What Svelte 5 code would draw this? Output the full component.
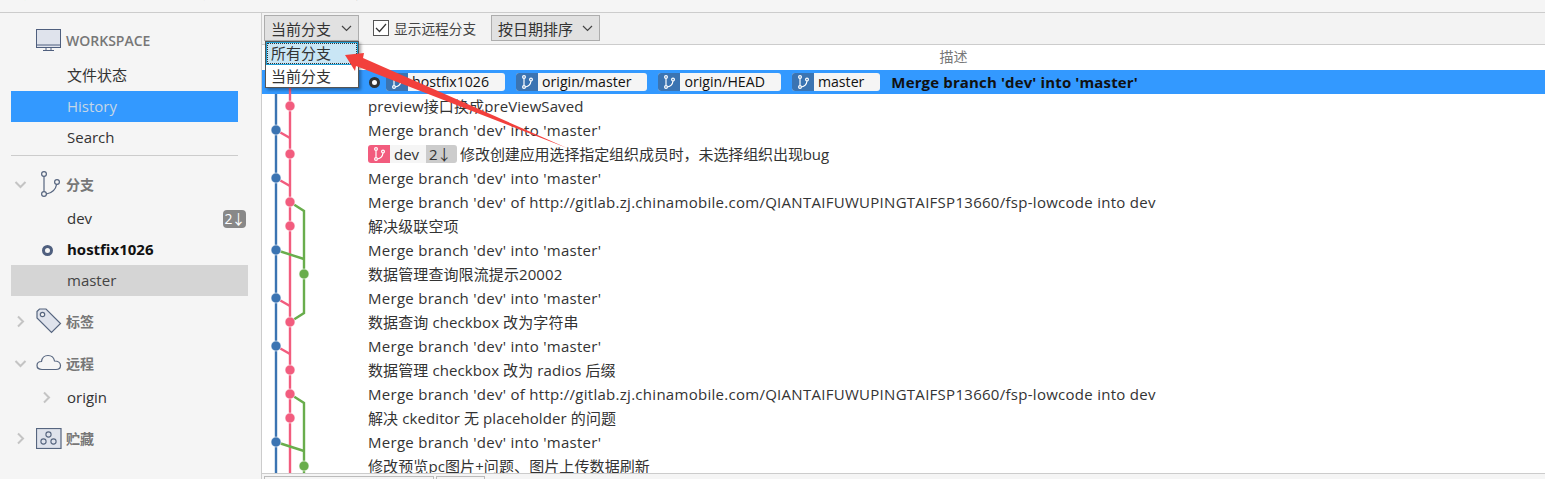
<script>
  const menu = [
    { label: "提交", w: 100 },
    { label: "拉取", w: 68 },
    { label: "推送", w: 69 },
    { label: "获取", w: 98 },
    { label: "分支", w: 68 },
    { label: "合并", w: 97 },
    { label: "贮藏", w: 110, off: true },
    { label: "丢弃", w: 60, off: true },
    { label: "标签", w: 40 }
  ];

  const commits = [
    "preview接口换成preViewSaved",
    "Merge branch 'dev' into 'master'",
    null,
    "Merge branch 'dev' into 'master'",
    "Merge branch 'dev' of http://gitlab.zj.chinamobile.com/QIANTAIFUWUPINGTAIFSP13660/fsp-lowcode into dev",
    "解决级联空项",
    "Merge branch 'dev' into 'master'",
    "数据管理查询限流提示20002",
    "Merge branch 'dev' into 'master'",
    "数据查询 checkbox 改为字符串",
    "Merge branch 'dev' into 'master'",
    "数据管理 checkbox 改为 radios 后缀",
    "Merge branch 'dev' of http://gitlab.zj.chinamobile.com/QIANTAIFUWUPINGTAIFSP13660/fsp-lowcode into dev",
    "解决 ckeditor 无 placeholder 的问题",
    "Merge branch 'dev' into 'master'",
    "修改预览pc图片+问题、图片上传数据刷新"
  ];

  const isLatin = (s) => /^[\x00-\x7f]+$/.test(s);

  const refs = ["hostfix1026", "origin/master", "origin/HEAD", "master"];

  // graph coordinates are relative to the rows area (x - 262, y - 70)
  const blue = "#3b74b2";
  const red = "#f25c7e";
  const green = "#69ad4c";
  const X = { b: 14, r: 28, g: 42 };
  const rowY = (i) => 12 + i * 24;
  const dots = [
    ["r", 1], ["b", 2], ["r", 3], ["b", 4], ["r", 5], ["r", 6], ["b", 7], ["g", 8],
    ["b", 9], ["r", 10], ["b", 11], ["r", 12], ["r", 13], ["r", 14], ["b", 15], ["g", 16]
  ];
  const colors = { b: blue, r: red, g: green };
  const links = [
    { d: "M14 60 L28 68", c: red },
    { d: "M14 108 L28 116", c: red },
    { d: "M14 228 L28 236", c: red },
    { d: "M14 276 L28 284", c: red },
    { d: "M28 132 L42 141 L42 243 L28 252", c: green },
    { d: "M14 180 L42 189", c: green },
    { d: "M28 324 L42 333 L42 410", c: green },
    { d: "M14 372 L42 381", c: green }
  ];
</script>

{#snippet branchIcon()}
  <svg class="branch" width="12" height="14" viewBox="0 0 12 14" fill="none" stroke="#fff" stroke-width="1.2">
    <circle cx="3" cy="2" r="1.4" />
    <circle cx="3" cy="12" r="1.4" />
    <circle cx="10" cy="4.6" r="1.4" />
    <path d="M3 3.4V10.6M4.4 12C7.5 11.5 9.6 9 10 6" />
  </svg>
{/snippet}

{#snippet chevron(open, size = 13)}
  <svg class="chev" width={size} height={size} viewBox="0 0 13 13" fill="none" stroke="#c4c4c4" stroke-width="2">
    {#if open}
      <path d="M1.5 4 L6.5 9 L11.5 4" />
    {:else}
      <path d="M4 1.5 L9 6.5 L4 11.5" />
    {/if}
  </svg>
{/snippet}

{#snippet comboArrow()}
  <svg width="11" height="7" viewBox="0 0 11 7" fill="none" stroke="#444" stroke-width="1.2">
    <path d="M1 1 L5.5 5.5 L10 1" />
  </svg>
{/snippet}

<div class="app">
  <nav class="menubar">
    {#each menu as m}
      <span class:off={m.off} style="width: {m.w}px">{m.label}</span>
    {/each}
  </nav>

  <div class="main">
    <aside class="sidebar">
      <div class="workspace">
        <svg width="26" height="22" viewBox="0 0 26 22" fill="none">
          <rect x="0.5" y="0.5" width="24" height="18" fill="#dfe3ec" stroke="#4f5f7e" />
          <path d="M0.5 16h24" stroke="#4f5f7e" />
          <path d="M10 19v2M15 19v2M7 21.5h11" stroke="#4f5f7e" />
        </svg>
        <span>WORKSPACE</span>
      </div>
      <div class="item">文件状态</div>
      <div class="item active">History</div>
      <div class="item">Search</div>
      <div class="rule"></div>

      <div class="section first">
        {@render chevron(true)}
        <svg class="section-icon" width="26" height="26" viewBox="0 0 26 26" fill="none" stroke="#56657f" stroke-width="1.2">
          <circle cx="8" cy="3" r="2.4" />
          <circle cx="8" cy="23" r="2.4" />
          <circle cx="21" cy="11" r="2.4" />
          <path d="M8 5.4V20.6M10.4 23C16 22 19.8 18 20.6 13.4" />
        </svg>
        <span>分支</span>
      </div>
      <div class="item branch-item">dev<span class="behind">2↓</span></div>
      <div class="item branch-item current">
        <span class="head"></span>hostfix1026
      </div>
      <div class="item branch-item selected">master</div>

      <div class="section tags">
        {@render chevron(false)}
        <svg class="section-icon" width="26" height="26" viewBox="0 0 26 26" fill="none" stroke="#56657f" stroke-width="1.2">
          <path d="M1 3.5 L3.5 1 L10 1 L24.5 15.5 L15.5 24.5 L1 10 Z" fill="#dfe3ec" />
          <circle cx="6.5" cy="6.5" r="2.2" fill="#f5f5f5" />
        </svg>
        <span>标签</span>
      </div>
      <div class="section remote">
        {@render chevron(true)}
        <svg class="section-icon" width="26" height="18" viewBox="0 0 26 18" fill="none" stroke="#56657f" stroke-width="1.2">
          <path d="M6 15.5C2.5 15.5 1 13.5 1 11.5C1 9 3 7.5 5.5 7.5C6 4 8.5 1.5 12 1.5C15.5 1.5 18 4 18.5 7C22 7 24.5 9 24.5 11.5C24.5 14 22.5 15.5 20 15.5Z" />
        </svg>
        <span>远程</span>
      </div>
      <div class="item origin">
        {@render chevron(false)}
        origin
      </div>
      <div class="section stash">
        {@render chevron(false)}
        <svg class="section-icon" width="26" height="21" viewBox="0 0 26 21" fill="none" stroke="#56657f" stroke-width="1.1">
          <rect x="0.5" y="0.5" width="24.5" height="20" fill="#dfe3ec" stroke-width="1.2" />
          <circle cx="12.5" cy="6.5" r="2.6" />
          <circle cx="7.5" cy="13.5" r="2.6" />
          <circle cx="17.5" cy="13.5" r="2.6" />
        </svg>
        <span>贮藏</span>
      </div>
    </aside>

    <section class="content">
      <div class="toolbar">
        <div class="combo first-combo">当前分支 {@render comboArrow()}</div>
        <label class="check">
          <svg width="16" height="16" viewBox="0 0 16 16" fill="none">
            <rect x="0.5" y="0.5" width="15" height="15" fill="#fff" stroke="#555" />
            <path d="M3 8 L6.5 11.5 L13 4" stroke="#333" stroke-width="1.2" />
          </svg>
          显示远程分支
        </label>
        <div class="combo sort-combo">按日期排序 {@render comboArrow()}</div>
      </div>

      <div class="table-head">描述</div>

      <div class="rows">
        <div class="row selected-row">
          <span class="marker"></span>
          {#each refs as r}
            <span class="pill">
              <span class="pill-icon">{@render branchIcon()}</span>
              <span class="pill-text">{r}</span>
            </span>
          {/each}
          <b>Merge branch 'dev' into 'master'</b>
        </div>
        {#each commits as c}
          <div class="row" class:latin={c && isLatin(c)}>
            {#if c}
              {c}
            {:else}
              <span class="pill dev">
                <span class="pill-icon">{@render branchIcon()}</span>
                <span class="pill-text">dev</span>
                <span class="pill-count">2↓</span>
              </span>
              <span class="dev-msg">修改创建应用选择指定组织成员时，未选择组织出现bug</span>
            {/if}
          </div>
        {/each}

        <svg class="graph" width="60" height="404" viewBox="0 0 60 404" fill="none">
          <path d="M14 24V404" stroke={blue} stroke-width="2.4" />
          <path d="M28 18V404" stroke={red} stroke-width="2.4" />
          {#each links as l}
            <path d={l.d} stroke={l.c} stroke-width="2.4" />
          {/each}
          {#each dots as [col, i]}
            <circle cx={X[col]} cy={rowY(i)} r="5" fill={colors[col]} stroke="#fff" stroke-width="0.6" />
          {/each}
        </svg>
      </div>

      <div class="statusbar">
        <span class="tab wide"></span>
        <span class="tab"></span>
      </div>

      <ul class="dropdown">
        <li class="focused">所有分支</li>
        <li>当前分支</li>
      </ul>
    </section>
  </div>

  <svg class="annotation" width="240" height="110" viewBox="0 0 240 110">
    <polygon points="5,5 24,3 23,8 227,98 16,16 15,21" fill="#f2403c" />
  </svg>
</div>

<style>
  :global(body) {
    margin: 0;
    background: #fff;
  }

  .app {
    position: relative;
    width: 1545px;
    height: 479px;
    overflow: hidden;
    display: flex;
    flex-direction: column;
    font-family: "Open Sans", "Noto Sans CJK SC", sans-serif;
    font-size: 14px;
    color: #333;
  }

  /* only the very bottom of the toolbar captions is left in the crop */
  .menubar {
    flex: none;
    height: 12px;
    padding-left: 20px;
    display: flex;
    align-items: flex-end;
    overflow: hidden;
    background: #f5f5f5;
    border-bottom: 1px solid #ccc;
  }

  .menubar span {
    flex: none;
    font-size: 15px;
    line-height: 15px;
    height: 15px;
    margin-bottom: 12px;
    color: #222;
  }

  .menubar .off {
    color: #999;
  }

  .main {
    flex: 1;
    display: flex;
    min-height: 0;
  }

  .sidebar {
    flex: none;
    width: 262px;
    box-sizing: border-box;
    padding: 14px 0 0 11px;
    background: #f5f5f5;
    border-right: 1px solid #ccc;
  }

  .workspace {
    display: flex;
    align-items: center;
    height: 26px;
    padding-left: 25px;
    font-size: 14px;
    font-weight: 600;
    color: #777;
  }

  .workspace span {
    margin-left: 4px;
  }

  .item {
    height: 31px;
    line-height: 31px;
    width: 227px;
    box-sizing: border-box;
    padding-left: 56px;
    font-size: 15px;
    color: #333;
    position: relative;
    white-space: nowrap;
  }

  .workspace + .item {
    margin-top: 7px;
  }

  .item.active {
    background: #3399ff;
    color: #c6d6e6;
  }

  .rule {
    width: 227px;
    height: 1px;
    margin-top: 2px;
    background: #ccc;
  }

  .section {
    display: flex;
    align-items: center;
    height: 26px;
    padding-left: 3px;
    font-size: 14px;
    font-weight: 600;
    color: #777;
  }

  .section .chev {
    flex: none;
  }

  .section-icon {
    flex: none;
    margin-left: 9px;
    margin-right: 4px;
  }

  .section.first {
    margin-top: 15px;
    margin-bottom: 6px;
  }

  .branch-item {
    width: 237px;
  }

  .behind {
    position: absolute;
    left: 212px;
    top: 7px;
    width: 23px;
    height: 18px;
    line-height: 18px;
    text-align: center;
    border-radius: 4px;
    background: #888;
    color: #fff;
    font-size: 14px;
    letter-spacing: -1px;
  }

  .current {
    font-weight: 700;
    color: #111;
  }

  .head {
    position: absolute;
    left: 31px;
    top: 11px;
    width: 5px;
    height: 5px;
    border: 3px solid #4f5f7e;
    border-radius: 50%;
  }

  .selected {
    background: #d5d5d5;
    color: #444;
  }

  .section.tags {
    margin-top: 12px;
  }

  .section.remote {
    margin-top: 16px;
  }

  .origin {
    margin-top: 6px;
  }

  .origin .chev {
    position: absolute;
    left: 29px;
    top: 9px;
  }

  .section.stash {
    margin-top: 12px;
  }

  .content {
    position: relative;
    flex: 1;
    min-width: 0;
    display: flex;
    flex-direction: column;
  }

  .toolbar {
    flex: none;
    height: 32px;
    display: flex;
    align-items: flex-start;
    gap: 14px;
    padding: 2px 0 0 2px;
    box-sizing: border-box;
    background: #f3f3f3;
    border-bottom: 1px solid #ccc;
  }

  .combo {
    display: flex;
    align-items: center;
    justify-content: space-between;
    height: 26px;
    box-sizing: border-box;
    padding: 0 6px;
    font-size: 15px;
    background: #e1e1e1;
    border: 1px solid #adadad;
    color: #333;
    white-space: nowrap;
  }

  .first-combo {
    width: 95px;
  }

  .sort-combo {
    width: 109px;
  }

  .check {
    display: flex;
    align-items: center;
    gap: 5px;
    height: 26px;
    width: 104px;
    font-size: 13.7px;
    color: #444;
    white-space: nowrap;
  }

  .table-head {
    flex: none;
    height: 25px;
    line-height: 24px;
    padding-left: 100px;
    text-align: center;
    font-size: 14px;
    color: #777;
  }

  .rows {
    position: relative;
    flex: 1;
    min-height: 0;
    overflow: hidden;
    background: #fff;
  }

  .row {
    height: 24px;
    line-height: 24px;
    padding-left: 106px;
    display: flex;
    align-items: center;
    white-space: pre;
    font-size: 15px;
    letter-spacing: 0.1px;
    color: #333;
  }

  .row.latin {
    letter-spacing: 0.28px;
  }

  .dev-msg {
    margin-left: 3px;
    letter-spacing: -0.1px;
  }

  .selected-row {
    background: #3399ff;
    color: #111;
    position: relative;
  }

  .selected-row b {
    font-weight: 700;
    letter-spacing: 0.14px;
  }

  .marker {
    position: absolute;
    left: 107px;
    top: 7px;
    width: 5px;
    height: 5px;
    border: 3px solid #333;
    border-radius: 50%;
    background: #fff;
  }

  .pill {
    display: inline-flex;
    align-items: stretch;
    height: 18px;
    margin-right: 11px;
    border-radius: 3px;
    overflow: hidden;
    background: #f5f5f5;
    font-size: 14.15px;
    letter-spacing: 0;
    line-height: 18px;
    flex: none;
  }

  .selected-row .marker + .pill {
    margin-left: 18px;
  }

  .pill-icon {
    width: 22px;
    display: flex;
    align-items: center;
    justify-content: center;
    background: #3b74b2;
  }

  .pill-text {
    padding: 0 16px 0 4px;
  }

  .dev {
    margin-right: 0;
    font-size: 15px;
  }

  .dev .pill-icon {
    background: #f25c7e;
  }

  .dev .pill-text {
    padding: 0 7px 0 4px;
  }

  .pill-count {
    width: 31px;
    padding-left: 3px;
    box-sizing: border-box;
    background: #ccc;
    letter-spacing: -1px;
  }

  .graph {
    position: absolute;
    left: 0;
    top: 0;
    pointer-events: none;
  }

  .statusbar {
    flex: none;
    height: 6px;
    box-sizing: border-box;
    display: flex;
    gap: 2px;
    padding: 2px 0 0 2px;
    background: #f5f5f5;
    border-top: 1px solid #ccc;
    overflow: hidden;
  }

  .tab {
    width: 49px;
    height: 8px;
    box-sizing: border-box;
    border: 1px solid #bbb;
    flex: none;
  }

  .tab.wide {
    width: 170px;
  }

  .dropdown {
    position: absolute;
    left: 3px;
    top: 28px;
    width: 94px;
    margin: 0;
    padding: 0;
    list-style: none;
    box-sizing: border-box;
    background: #fff;
    border: 1px solid #555;
    box-shadow: 2px 2px 3px rgba(0, 0, 0, 0.35);
    font-size: 15px;
    color: #333;
  }

  .dropdown li {
    height: 22px;
    line-height: 22px;
    padding-left: 5px;
    box-sizing: border-box;
  }

  .dropdown .focused {
    height: 23px;
    line-height: 20px;
    background: #c9e6f5;
    border: 1px solid #1e9fd6;
    outline: 1px dotted #333;
    outline-offset: -2px;
    padding-left: 4px;
  }

  .annotation {
    position: absolute;
    left: 340px;
    top: 50px;
    pointer-events: none;
  }
</style>
